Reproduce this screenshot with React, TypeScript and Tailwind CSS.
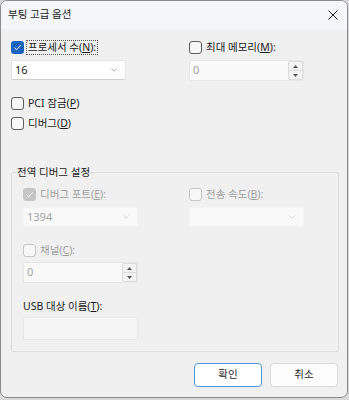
import { ChevronDown } from 'lucide-react'

const font = { fontFamily: '"Noto Sans", "Noto Sans CJK KR", sans-serif' }

function Check({ checked, disabled }: { checked?: boolean; disabled?: boolean }) {
  if (checked) {
    return (
      <span
        className={`flex h-[13px] w-[13px] shrink-0 items-center justify-center rounded-[3px] ${
          disabled ? 'bg-[#c5c5c5]' : 'bg-[#1a63c0]'
        }`}
      >
        <svg width="9" height="9" viewBox="0 0 9 9" fill="none">
          <path d="M1.5 4.8 L3.6 6.8 L7.6 2.2" stroke="white" strokeWidth="1" />
        </svg>
      </span>
    )
  }
  return (
    <span
      className={`h-[13px] w-[13px] shrink-0 rounded-[3px] border ${
        disabled ? 'border-[#c6c6c6] bg-[#f7f7f7]' : 'border-[#5e5e5e] bg-[#f7f7f7]'
      }`}
    />
  )
}

function Combo({ value, disabled }: { value?: string; disabled?: boolean }) {
  return (
    <div
      className={`flex h-[20px] w-[115px] items-center justify-between rounded-[2px] border pl-[3px] pr-[6px] text-[11px] ${
        disabled
          ? 'border-[#f4f4f4] bg-[#f9f9f9] text-[#a3a3a3]'
          : 'border-[#e3e3e3] border-b-[#cfcfcf] bg-white text-[#1b1b1b]'
      }`}
    >
      <span>{value}</span>
      <ChevronDown size={10} strokeWidth={1.5} className={disabled ? 'text-[#c0c0c0]' : 'text-[#7a7a7a]'} />
    </div>
  )
}

function Spin({ value }: { value: string }) {
  return (
    <div className="flex h-[21px] w-[115px] items-stretch rounded-[2px] border border-[#e6e6e6] bg-[#f9f9f9] text-[11px] text-[#a3a3a3]">
      <span className="flex flex-1 items-center pl-[3px]">{value}</span>
      <div className="flex w-[15px] flex-col rounded-[2px] border border-[#dcdcdc] bg-[#f3f3f3]">
        <span className="flex flex-1 items-center justify-center border-b border-[#dcdcdc]">
          <svg width="5" height="3" viewBox="0 0 5 3"><path d="M0 3 L2.5 0 L5 3Z" fill="#555" /></svg>
        </span>
        <span className="flex flex-1 items-center justify-center">
          <svg width="5" height="3" viewBox="0 0 5 3"><path d="M0 0 L2.5 3 L5 0Z" fill="#555" /></svg>
        </span>
      </div>
    </div>
  )
}

function Option({
  label,
  hot,
  rest = ':',
  checked,
  disabled,
  focus,
}: {
  label: string
  hot: string
  rest?: string
  checked?: boolean
  disabled?: boolean
  focus?: boolean
}) {
  return (
    <div className="flex h-[14px] items-center gap-[3px]">
      <Check checked={checked} disabled={disabled} />
      <span
        className={`whitespace-nowrap px-[1px] text-[10.5px] leading-[13px] ${disabled ? 'text-[#a0a0a0]' : 'text-[#1b1b1b]'} ${
          focus ? 'outline outline-1 outline-dotted outline-[#555]' : ''
        }`}
      >
        {label}(<span className="underline">{hot}</span>){rest}
      </span>
    </div>
  )
}

export default function App() {
  return (
    <div className="h-[400px] w-[349px] bg-[#d8d8d8]" style={font}>
      <div className="flex h-[398px] w-[348px] flex-col overflow-hidden rounded-[7px] border border-[#8c8c8c] bg-[#f0f0f0]">
        {/* title bar */}
        <div className="flex h-[28px] shrink-0 items-center justify-between bg-[#f4f6fa] pl-[7px] pr-[9px]">
          <span className="text-[10.5px] text-[#1b1b1b]">부팅 고급 옵션</span>
          <svg width="10" height="10" viewBox="0 0 10 10">
            <path d="M0.5 0.5 L9.5 9.5 M9.5 0.5 L0.5 9.5" stroke="#222" strokeWidth="1" />
          </svg>
        </div>

        <div className="flex flex-1 flex-col pl-[10px] pr-[9px] pt-[11px]">
          {/* processors / memory */}
          <div className="flex">
            <div className="flex w-[178px] flex-col gap-[6px]">
              <Option label="프로세서 수" hot="N" checked focus />
              <Combo value="16" />
            </div>
            <div className="flex flex-col gap-[6px]">
              <Option label="최대 메모리" hot="M" />
              <Spin value="0" />
            </div>
          </div>

          <div className="mt-[15px] flex flex-col gap-[6px]">
            <Option label="PCI 잠금" hot="P" rest="" />
            <Option label="디버그" hot="D" rest="" />
          </div>

          {/* global debug settings */}
          <div className="relative mt-[42px] h-[180px] w-[328px] rounded-[2px] border border-[#dcdcdc]">
            <span className="absolute -top-[9px] left-[4px] bg-[#f0f0f0] px-[1px] text-[10.5px] leading-[16px] text-[#1b1b1b]">
              전역 디버그 설정
            </span>
            <div className="flex flex-col pl-[11px] pt-[14px]">
              <div className="flex">
                <div className="flex w-[166px] flex-col gap-[6px]">
                  <Option label="디버그 포트" hot="E" checked disabled />
                  <Combo value="1394" disabled />
                </div>
                <div className="flex flex-col gap-[6px]">
                  <Option label="전송 속도" hot="B" disabled />
                  <Combo disabled />
                </div>
              </div>
              <div className="mt-[16px] flex flex-col gap-[5px]">
                <Option label="채널" hot="C" disabled />
                <Spin value="0" />
              </div>
              <div className="mt-[16px] flex flex-col gap-[4px]">
                <span className="text-[10.5px] leading-[14px] text-[#1b1b1b]">
                  USB 대상 이름(<span className="underline">T</span>):
                </span>
                <div className="h-[23px] w-[115px] rounded-[2px] border border-[#e8e8e8] bg-[#f5f5f5]" />
              </div>
            </div>
          </div>

          {/* buttons */}
          <div className="mt-[11px] flex justify-end gap-[8px]">
            <button className="h-[24px] w-[68px] rounded-[4px] border border-[#4d95dc] bg-white text-[10.5px] text-[#1b1b1b]">
              확인
            </button>
            <button className="h-[24px] w-[68px] rounded-[4px] border border-[#dadada] bg-[#fdfdfd] text-[10.5px] text-[#1b1b1b]">
              취소
            </button>
          </div>
        </div>
      </div>
    </div>
  )
}
